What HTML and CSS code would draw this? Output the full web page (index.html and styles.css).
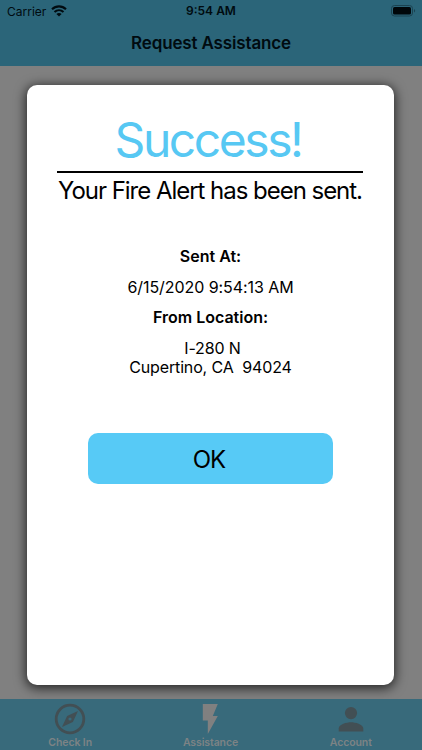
FILE: index.html
```html
<!DOCTYPE html>
<html lang="en">
  <head>
    <meta charset="utf-8">
    <title>Request Assistance</title>
    <link rel="stylesheet" href="styles.css">
  </head>
  <body>
    <header class="header">
      <div class="status-bar">
        <div class="carrier">
          <span>Carrier</span>
          <svg class="wifi" viewBox="0 0 16 12">
            <path d="M1 4.3C5 .4 11 .4 15 4.3M3.5 7c2.6-2.4 6.4-2.4 9 0" fill="none" stroke="#000b10" stroke-width="2.1" />
            <path d="M8 11.6 5.4 8.9c1.5-1.2 3.7-1.2 5.2 0z" fill="#000b10" />
          </svg>
        </div>
        <span class="time">9:54 AM</span>
        <svg class="battery" viewBox="0 0 25 12">
          <rect x=".5" y=".5" width="21" height="10.5" rx="3" fill="none" stroke="#1b4351" />
          <rect x="2" y="2" width="18" height="7.5" rx="1.6" fill="#00070a" />
          <path d="M23 4c1.5.6 1.5 3 0 3.6z" fill="#1b4351" />
        </svg>
      </div>
      <h1 class="title">Request Assistance</h1>
    </header>

    <main class="content">
      <div class="modal">
        <h2 class="success">Success!</h2>
        <p class="message">Your Fire Alert has been sent.</p>
        <div class="details">
          <p class="label">Sent At:</p>
          <p class="date">6/15/2020 9:54:13 AM</p>
          <p class="label">From Location:</p>
          <p class="address"><span class="street">I-280 N</span><br>Cupertino, CA&nbsp; 94024</p>
        </div>
        <button type="button" class="ok-button">OK</button>
      </div>
    </main>

    <nav class="tabs">
      <div class="tab">
        <svg class="icon" viewBox="0 0 36 36">
          <circle cx="18" cy="18" r="13.8" fill="none" stroke="#424f54" stroke-width="2.8" />
          <path fill-rule="evenodd" d="M26 10 20.9 21 10 26l5.1-11zM18 16.4a1.6 1.6 0 1 0 0 3.2 1.6 1.6 0 0 0 0-3.2z" fill="#424f54" />
        </svg>
        <span>Check In</span>
      </div>
      <div class="tab">
        <svg class="icon" viewBox="0 0 36 36">
          <path d="M10.8 3h15l-5 12h5L15.8 33V19.5h-5z" fill="#808080" />
        </svg>
        <span>Assistance</span>
      </div>
      <div class="tab">
        <svg class="icon" viewBox="0 0 36 36">
          <path d="M18 18.2a6.1 6.1 0 1 0 0-12.2 6.1 6.1 0 0 0 0 12.2zM18 21.2c-4.1 0-12.3 2.1-12.3 6.1v3.3h24.6v-3.3c0-4-8.2-6.1-12.3-6.1z" fill="#424f54" />
        </svg>
        <span>Account</span>
      </div>
    </nav>
  </body>
</html>
```
FILE: styles.css
```css
body {
  font-family: Inter, "Liberation Sans", sans-serif;
  margin: 0;
  height: 750px;
  display: flex;
  flex-direction: column;
  background-color: #808080;
  color: #000;
  overflow: hidden;
}

h1,
h2,
p {
  margin: 0;
  white-space: nowrap;
}

.header {
  height: 66px;
  background-color: #2b6579;
  color: #000b10;
}

.status-bar {
  height: 22px;
  padding: 0 7px;
  display: grid;
  grid-template-columns: 1fr auto 1fr;
  align-items: center;
  font-size: 12px;
}

.carrier {
  display: flex;
  align-items: center;
  gap: 5px;
}

.wifi {
  width: 16px;
  height: 12px;
}

.time {
  font-size: 12px;
  font-weight: 600;
  padding-bottom: 1px;
}

.battery {
  width: 25px;
  height: 12px;
  justify-self: end;
  margin-right: -1px;
}

.title {
  font-size: 17px;
  font-weight: 600;
  letter-spacing: -0.15px;
  line-height: 43px;
  text-align: center;
}

.content {
  height: 633px;
  display: flex;
  justify-content: center;
}

.modal {
  width: 367px;
  height: 600px;
  margin-top: 19px;
  margin-right: 1px;
  background-color: #fff;
  border-radius: 10px;
  box-shadow: 0 2px 12px 1px rgba(0, 0, 0, 0.75);
  display: flex;
  flex-direction: column;
  align-items: center;
}

.success {
  width: 302px;
  height: 86px;
  margin-right: 1px;
  padding-right: 4px;
  border-bottom: 2px solid #000;
  color: #57c8f3;
  font-size: 48px;
  font-weight: 400;
  letter-spacing: -2.45px;
  line-height: 110px;
  text-align: center;
}

.message {
  font-size: 24px;
  letter-spacing: -1.03px;
  line-height: 35px;
  margin-right: 1px;
}

.details {
  padding-top: 39px;
  font-size: 16px;
  line-height: 19px;
  text-align: center;
}

.details p {
  margin-bottom: 11.5px;
}

.label {
  font-weight: 600;
}

.date {
  letter-spacing: -0.07px;
}

.address {
  letter-spacing: -0.15px;
}

.street {
  padding-left: 4px;
}

.ok-button {
  width: 245px;
  height: 51px;
  margin-top: 45px;
  padding: 1px 3px 0 0;
  border: none;
  border-radius: 10px;
  background-color: #57caf6;
  color: #000;
  font-family: inherit;
  font-size: 24px;
  letter-spacing: -1px;
}

.tabs {
  height: 51px;
  padding-right: 1px;
  display: grid;
  grid-template-columns: repeat(3, 1fr);
  background-color: #386a7b;
}

.tab {
  display: flex;
  flex-direction: column;
  align-items: center;
  color: #7d8385;
  font-size: 10.5px;
  font-weight: 600;
  letter-spacing: -0.1px;
  line-height: 13px;
}

.icon {
  width: 36px;
  height: 36px;
  margin-top: 2px;
  margin-bottom: -1px;
}
```
